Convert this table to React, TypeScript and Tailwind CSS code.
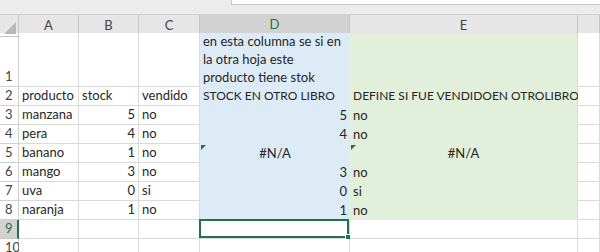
import React from 'react';

type Cell = {
  text?: string;
  align?: 'left' | 'right' | 'center';
  fill?: 'blue' | 'green';
  flag?: boolean;
  caps?: boolean;
};

const cols = ['A', 'B', 'C', 'D', 'E', ''];

const rows: Cell[][] = [
  [{}, {}, {}, { text: 'en esta columna se si en\nla otra hoja este\nproducto tiene stok', fill: 'blue' }, { fill: 'green' }, {}],
  [{ text: 'producto' }, { text: 'stock' }, { text: 'vendido' }, { text: 'STOCK EN OTRO LIBRO', fill: 'blue', caps: true }, { text: 'DEFINE SI FUE VENDIDOEN OTROLIBRO', fill: 'green', caps: true }, {}],
  [{ text: 'manzana' }, { text: '5', align: 'right' }, { text: 'no' }, { text: '5', align: 'right', fill: 'blue' }, { text: 'no', fill: 'green' }, {}],
  [{ text: 'pera' }, { text: '4', align: 'right' }, { text: 'no' }, { text: '4', align: 'right', fill: 'blue' }, { text: 'no', fill: 'green' }, {}],
  [{ text: 'banano' }, { text: '1', align: 'right' }, { text: 'no' }, { text: '#N/A', align: 'center', fill: 'blue', flag: true }, { text: '#N/A', align: 'center', fill: 'green', flag: true }, {}],
  [{ text: 'mango' }, { text: '3', align: 'right' }, { text: 'no' }, { text: '3', align: 'right', fill: 'blue' }, { text: 'no', fill: 'green' }, {}],
  [{ text: 'uva' }, { text: '0', align: 'right' }, { text: 'si' }, { text: '0', align: 'right', fill: 'blue' }, { text: 'si', fill: 'green' }, {}],
  [{ text: 'naranja' }, { text: '1', align: 'right' }, { text: 'no' }, { text: '1', align: 'right', fill: 'blue' }, { text: 'no', fill: 'green' }, {}],
  [{}, {}, {}, {}, {}, {}],
  [{}, {}, {}, {}, {}, {}],
];

const gridCols = 'grid grid-cols-[19px_60px_60px_61px_150px_228px_1fr]';

function DataCell({ cell, selected }: { cell: Cell; selected: boolean }) {
  const align =
    cell.align === 'right' ? 'justify-end' : cell.align === 'center' ? 'justify-center' : 'justify-start';
  let tone = 'bg-white border-r border-b border-[#dadada]';
  if (cell.fill === 'blue') tone = 'bg-[#ddebf7]';
  if (cell.fill === 'green') tone = 'bg-[#e2efda] border-r border-[#dadada]';

  return (
    <div className={`relative flex items-end px-[3px] pb-[1px] ${align} ${tone}`}>
      {cell.flag && (
        <svg className="absolute left-[1px] top-[1px]" width="5" height="5" viewBox="0 0 5 5">
          <polygon points="0,0 5,0 0,5" fill="#217346" />
        </svg>
      )}
      {cell.text && (
        <span className={`whitespace-pre leading-[18px] ${cell.caps ? 'text-[12px]' : ''}`}>{cell.text}</span>
      )}
      {selected && (
        <div className="absolute -left-[1px] -top-[1px] right-0 bottom-0 border-2 border-[#217346]">
          <div className="absolute -right-[4px] -bottom-[4px] w-[6px] h-[6px] bg-[#217346] border border-white" />
        </div>
      )}
    </div>
  );
}

export default function App() {
  return (
    <div
      className="w-[600px] h-[252px] overflow-hidden bg-white text-[13px] text-[#262626]"
      style={{ fontFamily: 'Lato, "Liberation Sans", sans-serif' }}
    >
      {/* formula bar edge */}
      <div className="h-[15px] bg-[#ececec] border-b border-[#d0d0d0] flex">
        <div className="ml-[231px] flex-1 h-[5px] bg-white border-l border-b border-[#c8c8c8]" />
      </div>

      {/* column headers */}
      <div className={`${gridCols} h-[18px] bg-[#e6e6e6] text-[#444]`}>
        <div className="relative border-r border-b border-[#c6c6c6]">
          <svg className="absolute right-[2px] bottom-[2px]" width="12" height="12" viewBox="0 0 12 12">
            <polygon points="12,0 12,12 0,12" fill="#b8b8b8" />
          </svg>
        </div>
        {cols.map((c, i) => (
          <div
            key={i}
            className={`flex items-center justify-center border-r ${
              c === 'D'
                ? 'bg-[#d2d2d2] text-[#217346] border-b-2 border-b-[#217346] border-r-[#c6c6c6]'
                : 'border-b border-[#c6c6c6]'
            }`}
          >
            {c}
          </div>
        ))}
      </div>

      {/* sheet body */}
      <div className={`${gridCols} grid-rows-[54px_repeat(9,19px)]`}>
        {rows.map((row, r) => (
          <React.Fragment key={r}>
            <div
              className={`flex items-end pl-[5px] pb-[1px] leading-[18px] ${
                r === 8
                  ? 'bg-[#d2d2d2] text-[#217346] border-r-2 border-r-[#217346] border-b border-b-[#c6c6c6]'
                  : 'bg-white text-[#444] border-r border-b border-[#d0d0d0]'
              }`}
            >
              {r + 1}
            </div>
            {row.map((cell, c) => (
              <DataCell key={c} cell={cell} selected={r === 8 && c === 3} />
            ))}
          </React.Fragment>
        ))}
      </div>
    </div>
  );
}
